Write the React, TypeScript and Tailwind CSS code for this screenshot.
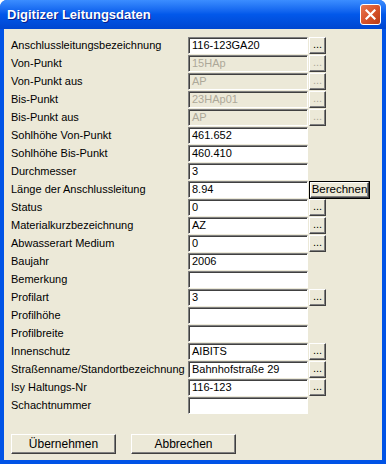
import React from "react";

type Row = {
  label: string;
  value: string;
  disabled?: boolean;
  btn?: "dots" | "calc";
};

const rows: Row[] = [
  { label: "Anschlussleitungsbezeichnung", value: "116-123GA20", btn: "dots" },
  { label: "Von-Punkt", value: "15HAp", disabled: true, btn: "dots" },
  { label: "Von-Punkt aus", value: "AP", disabled: true, btn: "dots" },
  { label: "Bis-Punkt", value: "23HAp01", disabled: true, btn: "dots" },
  { label: "Bis-Punkt aus", value: "AP", disabled: true, btn: "dots" },
  { label: "Sohlhöhe Von-Punkt", value: "461.652" },
  { label: "Sohlhöhe Bis-Punkt", value: "460.410" },
  { label: "Durchmesser", value: "3" },
  { label: "Länge der Anschlussleitung", value: "8.94", btn: "calc" },
  { label: "Status", value: "0", btn: "dots" },
  { label: "Materialkurzbezeichnung", value: "AZ", btn: "dots" },
  { label: "Abwasserart Medium", value: "0", btn: "dots" },
  { label: "Baujahr", value: "2006" },
  { label: "Bemerkung", value: "" },
  { label: "Profilart", value: "3", btn: "dots" },
  { label: "Profilhöhe", value: "" },
  { label: "Profilbreite", value: "" },
  { label: "Innenschutz", value: "AIBITS", btn: "dots" },
  { label: "Straßenname/Standortbezeichnung", value: "Bahnhofstraße 29", btn: "dots" },
  { label: "Isy Haltungs-Nr", value: "116-123", btn: "dots" },
  { label: "Schachtnummer", value: "" },
];

const raised =
  "border border-t-white border-l-white border-r-[#404040] border-b-[#404040] shadow-[inset_-1px_-1px_0_#808080] bg-[#ece9d8]";

export default function App() {
  return (
    <div
      className="w-[386px] h-[464px] flex flex-col overflow-hidden rounded-t-[7px] bg-[#0053e6]"
      style={{ fontFamily: '"Liberation Sans", Arial, sans-serif' }}
    >
      {/* Title bar */}
      <div className="h-[29px] shrink-0 flex items-center justify-between pl-[7px] pr-[5px] bg-gradient-to-b from-[#3b8dff] via-[#0258ea] to-[#0046d0]">
        <span className="text-white font-bold text-[13px] [text-shadow:1px_1px_0_#0a1e8c]">
          Digitizer Leitungsdaten
        </span>
        <div className="w-[21px] h-[21px] rounded-[3px] border border-white bg-gradient-to-br from-[#e8764f] via-[#d8532a] to-[#b83a15] flex items-center justify-center">
          <svg width="11" height="11" viewBox="0 0 11 11">
            <path d="M1.5 1.5 L9.5 9.5 M9.5 1.5 L1.5 9.5" stroke="white" strokeWidth="2.2" strokeLinecap="square" />
          </svg>
        </div>
      </div>

      {/* Body */}
      <div className="flex-1 mx-[4px] mb-[4px] bg-[#ece9d8] pt-[8px] pl-[7px] pb-[6px] flex flex-col text-[11px] text-black">
        <div className="flex flex-col gap-px">
          {rows.map((r) => (
            <div key={r.label} className="h-[17px] flex items-center">
              <span className="w-[177px] shrink-0 leading-none">{r.label}</span>
              <div
                className={`w-[120px] h-[17px] shrink-0 flex items-center pl-[3px] border border-t-[#808080] border-l-[#808080] border-r-white border-b-white shadow-[inset_1px_1px_0_#404040] leading-none ${
                  r.disabled ? "bg-[#ece9d8] text-[#aca899]" : "bg-white"
                }`}
              >
                {r.value}
              </div>
              {r.btn === "dots" && (
                <div
                  className={`ml-px w-[17px] h-[17px] shrink-0 flex items-end justify-center pb-[3px] leading-none ${raised} ${
                    r.disabled ? "text-[#aca899]" : ""
                  }`}
                >
                  ...
                </div>
              )}
              {r.btn === "calc" && (
                <div className="ml-px h-[18px] w-[61px] shrink-0 border border-black">
                  <div className={`h-full w-full flex items-center justify-center leading-none text-[11.5px] ${raised}`}>
                    Berechnen
                  </div>
                </div>
              )}
            </div>
          ))}
        </div>

        <div className="mt-auto flex gap-[15px]">
          <div className={`w-[105px] h-[20px] flex items-center justify-center text-[12px] ${raised}`}>
            Übernehmen
          </div>
          <div className={`w-[105px] h-[20px] flex items-center justify-center text-[12px] ${raised}`}>
            Abbrechen
          </div>
        </div>
      </div>
    </div>
  );
}
